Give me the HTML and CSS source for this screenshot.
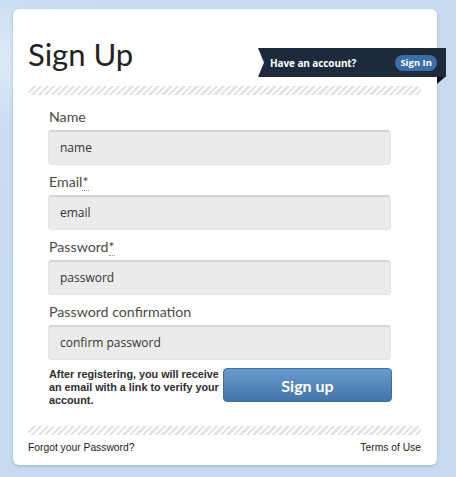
FILE: index.html
```html
<!DOCTYPE html>
<html lang="en">
<head>
<meta charset="utf-8">
<title>Sign Up</title>
<link rel="stylesheet" href="styles.css">
</head>
<body>
<div class="card">
  <header class="head">
    <h1 class="title">Sign Up</h1>
    <div class="ribbon">
      <span class="ribbon-text">Have an account?</span>
      <a class="pill" href="#">Sign In</a>
    </div>
  </header>
  <div class="stripes"></div>
  <form class="form">
    <div class="field">
      <label class="label">Name</label>
      <div class="input">name</div>
    </div>
    <div class="field">
      <label class="label">Email<abbr class="req">*</abbr></label>
      <div class="input">email</div>
    </div>
    <div class="field">
      <label class="label">Password<abbr class="req">*</abbr></label>
      <div class="input">password</div>
    </div>
    <div class="field">
      <label class="label">Password confirmation</label>
      <div class="input">confirm password</div>
    </div>
    <div class="submit-row">
      <p class="note">After registering, you will receive an email with a link to verify your account.</p>
      <button class="btn" type="button">Sign up</button>
    </div>
  </form>
  <div class="stripes"></div>
  <footer class="foot">
    <a href="#">Forgot your Password?</a>
    <a href="#">Terms of Use</a>
  </footer>
</div>
</body>
</html>
```

FILE: styles.css
```css
html, body {
  margin: 0;
  height: 100%;
}
body {
  background: #c7dcf1;
  background-image: radial-gradient(circle at 0 60px, #dde9f6 0, #c9ddf1 70px, #c6dbf0 200px);
  padding: 9px 19px 0 13px;
  box-sizing: border-box;
  font-family: "Lato", "Open Sans", sans-serif;
}
.card {
  position: relative;
  width: 424px;
  height: 456px;
  background: #fff;
  border-radius: 6px;
  box-shadow: 0 1px 3px rgba(60, 90, 130, 0.35);
  box-sizing: border-box;
  display: flex;
  flex-direction: column;
}
.head {
  height: 77px;
  padding-left: 15px;
  box-sizing: border-box;
}
.title {
  margin: 0;
  padding-top: 25px;
  font-family: "Lato", sans-serif;
  font-weight: 400;
  font-size: 31px;
  line-height: 40px;
  color: #222;
}
.ribbon {
  position: absolute;
  left: 245px;
  top: 39px;
  width: 188px;
  height: 29px;
  background: #1c2a3c;
  clip-path: polygon(0 0, 100% 0, 100% 100%, 0 100%, 6px 50%);
  display: flex;
  align-items: center;
  justify-content: space-between;
  padding: 0 9px 0 12px;
  box-sizing: border-box;
}
.ribbon-text {
  color: #fff;
  font-family: "Open Sans", sans-serif;
  font-weight: 700;
  font-size: 10px;
  letter-spacing: -0.1px;
}
.pill {
  background: #3b6ea8;
  color: #fff;
  font-family: "Open Sans", sans-serif;
  font-weight: 700;
  font-size: 9.5px;
  text-decoration: none;
  border-radius: 8px;
  padding: 2px 5px 2px 5px;
  line-height: 12px;
}
.head::after {
  content: "";
  position: absolute;
  left: 424px;
  top: 68px;
  width: 0;
  height: 0;
  border-left: 8px solid #0e1117;
  border-bottom: 7px solid transparent;
}
.stripes {
  margin: 0 16px 0 15px;
  height: 9px;
  border-radius: 4px;
  background: repeating-linear-gradient(-45deg, #fff 0, #fff 2.3px, #e3e3e3 2.3px, #e3e3e3 4.6px);
  flex: none;
}
.form {
  margin: 0;
  padding: 5px 0 0 35px;
}
.field {
  margin-top: 8px;
}
.label {
  display: block;
  font-size: 14.2px;
  line-height: 18px;
  color: #4a4a4a;
  margin-bottom: 4px;
  padding-left: 1px;
}
.req {
  text-decoration: none;
  border-bottom: 1px dotted #999;
}
.input {
  width: 343px;
  height: 35px;
  box-sizing: border-box;
  background: #ebebeb;
  border: 1px solid #e4e4e4;
  border-top: 2px solid #d4d4d4;
  border-radius: 4px;
  padding-left: 11px;
  font-family: "Open Sans", sans-serif;
  font-size: 12px;
  line-height: 31px;
  color: #333;
}
.submit-row {
  display: flex;
  justify-content: space-between;
  width: 344px;
  margin-top: 8px;
  margin-bottom: 19px;
}
.note {
  margin: 0;
  width: 172px;
  padding-left: 1px;
  font-family: "Liberation Sans", Arial, sans-serif;
  font-weight: 700;
  font-size: 10.8px;
  line-height: 13px;
  color: #2e2e2e;
}
.btn {
  width: 169px;
  height: 34px;
  border: 1px solid #3d6ea3;
  border-radius: 4px;
  background: linear-gradient(#6a9bcc, #4373aa);
  color: #fff;
  font-family: "Lato", sans-serif;
  font-size: 16px;
  font-weight: 700;
  padding: 0;
}
.foot {
  display: flex;
  justify-content: space-between;
  margin: 0 16px 0 15px;
  padding-top: 7px;
  font-family: "Liberation Sans", Arial, sans-serif;
  font-size: 10.3px;
}
.foot a {
  color: #222;
  text-decoration: none;
}
```
